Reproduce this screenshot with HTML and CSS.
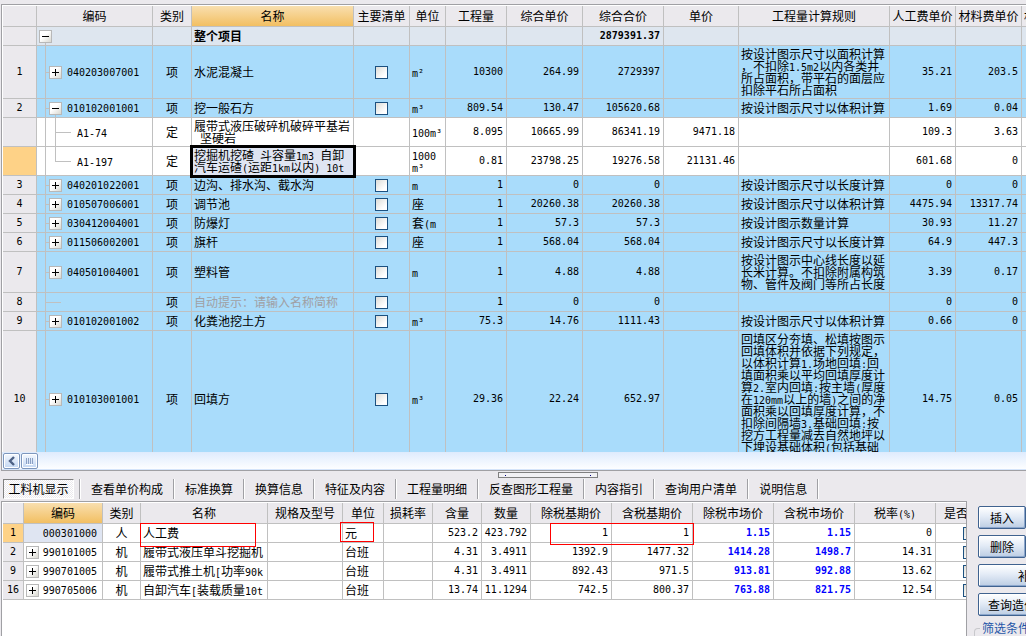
FILE: index.html
```html
<!DOCTYPE html>
<html lang="zh-CN">
<head>
<meta charset="utf-8">
<title>工程量清单</title>
<link rel="stylesheet" href="styles.css">
</head>
<body>
<main class="app">
<section class="upper">
<div class="grid-view">
<table class="grid main-grid">
<colgroup><col class="w34"><col class="w116"><col class="w39"><col class="w162"><col class="w56"><col class="w36"><col class="w61"><col class="w76"><col class="w81"><col class="w75"><col class="w151"><col class="w66"><col class="w66"><col class="w66"></colgroup>
<thead>
<tr><th></th><th>编码</th><th>类别</th><th class="active">名称</th><th>主要清单</th><th>单位</th><th>工程量</th><th>综合单价</th><th>综合合价</th><th>单价</th><th>工程量计算规则</th><th>人工费单价</th><th>材料费单价</th><th class="left">机械费单价</th></tr>
</thead>
<tbody>
<tr class="total"><th></th><td class="root"><button class="exp minus" aria-label="折叠"></button></td><td></td><td>整个项目</td><td></td><td></td><td></td><td></td><td class="num">2879391.37</td><td></td><td></td><td></td><td></td><td></td></tr>
<tr class="item h53"><th>1</th><td class="node"><button class="exp" aria-label="展开"></button><span class="n">040203007001</span></td><td class="mid">项</td><td>水泥混凝土</td><td class="mid"><input type="checkbox" aria-label="主要清单"></td><td><span class="n">m²</span></td><td class="num">10300</td><td class="num">264.99</td><td class="num">2729397</td><td></td><td>按设计图示尺寸以面积计算<br>，不扣除<span class="n">1.5m2</span>以内各类井<br>所占面积，带平石的面层应<br>扣除平石所占面积</td><td class="num">35.21</td><td class="num">203.5</td><td></td></tr>
<tr class="item"><th>2</th><td class="node open"><button class="exp minus" aria-label="折叠"></button><span class="n">010102001001</span></td><td class="mid">项</td><td>挖一般石方</td><td class="mid"><input type="checkbox" aria-label="主要清单"></td><td><span class="n">m³</span></td><td class="num">809.54</td><td class="num">130.47</td><td class="num">105620.68</td><td></td><td>按设计图示尺寸以体积计算</td><td class="num">1.69</td><td class="num">0.04</td><td></td></tr>
<tr class="h29"><th></th><td class="leaf"><span class="n">A1-74</span></td><td class="mid">定</td><td>履带式液压破碎机破碎平基岩<br><span class="n">&nbsp;</span>坚硬岩</td><td></td><td><span class="n">100m³</span></td><td class="num">8.095</td><td class="num">10665.99</td><td class="num">86341.19</td><td class="num">9471.18</td><td></td><td class="num">109.3</td><td class="num">3.63</td><td></td></tr>
<tr class="h29"><th class="current"></th><td class="leaf last"><span class="n">A1-197</span></td><td class="mid">定</td><td class="selected">挖掘机挖碴<span class="n">&nbsp;</span>斗容量<span class="n">1m3&nbsp;</span>自卸<br>汽车运碴<span class="n">(</span>运距<span class="n">1km</span>以内<span class="n">)&nbsp;10t</span></td><td></td><td><span class="n">1000<br>m³</span></td><td class="num">0.81</td><td class="num">23798.25</td><td class="num">19276.58</td><td class="num">21131.46</td><td></td><td class="num">601.68</td><td class="num">0</td><td></td></tr>
<tr class="item"><th>3</th><td class="node"><button class="exp" aria-label="展开"></button><span class="n">040201022001</span></td><td class="mid">项</td><td>边沟、排水沟、截水沟</td><td class="mid"><input type="checkbox" aria-label="主要清单"></td><td><span class="n">m</span></td><td class="num">1</td><td class="num">0</td><td class="num">0</td><td></td><td>按设计图示尺寸以长度计算</td><td class="num">0</td><td class="num">0</td><td></td></tr>
<tr class="item"><th>4</th><td class="node"><button class="exp" aria-label="展开"></button><span class="n">010507006001</span></td><td class="mid">项</td><td>调节池</td><td class="mid"><input type="checkbox" aria-label="主要清单"></td><td>座</td><td class="num">1</td><td class="num">20260.38</td><td class="num">20260.38</td><td></td><td>按设计图示尺寸以体积计算</td><td class="num">4475.94</td><td class="num">13317.74</td><td></td></tr>
<tr class="item"><th>5</th><td class="node"><button class="exp" aria-label="展开"></button><span class="n">030412004001</span></td><td class="mid">项</td><td>防爆灯</td><td class="mid"><input type="checkbox" aria-label="主要清单"></td><td>套<span class="n">(m</span></td><td class="num">1</td><td class="num">57.3</td><td class="num">57.3</td><td></td><td>按设计图示数量计算</td><td class="num">30.93</td><td class="num">11.27</td><td></td></tr>
<tr class="item"><th>6</th><td class="node"><button class="exp" aria-label="展开"></button><span class="n">011506002001</span></td><td class="mid">项</td><td>旗杆</td><td class="mid"><input type="checkbox" aria-label="主要清单"></td><td>座</td><td class="num">1</td><td class="num">568.04</td><td class="num">568.04</td><td></td><td>按设计图示尺寸以长度计算</td><td class="num">64.9</td><td class="num">447.3</td><td></td></tr>
<tr class="item h41"><th>7</th><td class="node"><button class="exp" aria-label="展开"></button><span class="n">040501004001</span></td><td class="mid">项</td><td>塑料管</td><td class="mid"><input type="checkbox" aria-label="主要清单"></td><td><span class="n">m</span></td><td class="num">1</td><td class="num">4.88</td><td class="num">4.88</td><td></td><td>按设计图示中心线长度以延<br>长米计算。不扣除附属构筑<br>物、管件及阀门等所占长度</td><td class="num">3.39</td><td class="num">0.17</td><td></td></tr>
<tr class="item"><th>8</th><td class="empty-node"></td><td class="mid">项</td><td class="hint">自动提示：请输入名称简称</td><td class="mid"><input type="checkbox" aria-label="主要清单"></td><td></td><td class="num">1</td><td class="num">0</td><td class="num">0</td><td></td><td></td><td class="num">0</td><td class="num">0</td><td></td></tr>
<tr class="item"><th>9</th><td class="node"><button class="exp" aria-label="展开"></button><span class="n">010102001002</span></td><td class="mid">项</td><td>化粪池挖土方</td><td class="mid"><input type="checkbox" aria-label="主要清单"></td><td><span class="n">m³</span></td><td class="num">75.3</td><td class="num">14.76</td><td class="num">1111.43</td><td></td><td>按设计图示尺寸以体积计算</td><td class="num">0.66</td><td class="num">0</td><td></td></tr>
<tr class="item h137"><th>10</th><td class="node"><button class="exp" aria-label="展开"></button><span class="n">010103001001</span></td><td class="mid">项</td><td>回填方</td><td class="mid"><input type="checkbox" aria-label="主要清单"></td><td><span class="n">m³</span></td><td class="num">29.36</td><td class="num">22.24</td><td class="num">652.97</td><td></td><td class="top">回填区分夯填、松填按图示<br>回填体积并依据下列规定，<br>以体积计算<span class="n">1.</span>场地回填<span class="n">:</span>回<br>填面积乘以平均回填厚度计<br>算<span class="n">2.</span>室内回填<span class="n">:</span>按主墙<span class="n">(</span>厚度<br>在<span class="n">120mm</span>以上的墙<span class="n">)</span>之间的净<br>面积乘以回填厚度计算，不<br>扣除间隔墙<span class="n">3.</span>基础回填<span class="n">:</span>按<br>挖方工程量减去自然地坪以<br>下埋设基础体积<span class="n">(</span>包括基础</td><td class="num">14.75</td><td class="num">0.05</td><td></td></tr>
</tbody>
</table>
</div>
<div class="scrollbar">
<button class="sb-arrow" aria-label="向左滚动"><svg width="8" height="10" viewBox="0 0 8 10"><path d="M6 1 2 5l4 4" fill="none" stroke="#4d6185" stroke-width="2.4"/></svg></button>
<button class="sb-thumb" aria-label="滚动条滑块"><svg width="9" height="7" viewBox="0 0 9 7"><path d="M1.500 0v6M3.500 0v6M5.500 0v6M7.500 0v6" stroke="#8ba0c4"/><path d="M1 6.500h7" stroke="#fff"/></svg></button>
</div>
</section>
<section class="lower">
<div class="handle"></div>
<nav class="tabs">
<div class="tab first"><button class="pressed">工料机显示</button></div>
<div class="tab"><button>查看单价构成</button></div>
<div class="tab"><button>标准换算</button></div>
<div class="tab"><button>换算信息</button></div>
<div class="tab"><button>特征及内容</button></div>
<div class="tab"><button>工程量明细</button></div>
<div class="tab"><button>反查图形工程量</button></div>
<div class="tab"><button>内容指引</button></div>
<div class="tab"><button>查询用户清单</button></div>
<div class="tab"><button>说明信息</button></div>
</nav>
<div class="detail">
<div class="detail-view">
<table class="grid detail-grid">
<colgroup><col class="w21"><col class="w79"><col class="w38"><col class="w127"><col class="w75"><col class="w41"><col class="w49"><col class="w49"><col class="w49"><col class="w81"><col class="w81"><col class="w81"><col class="w81"><col class="w81"><col class="w81"></colgroup>
<thead>
<tr><th></th><th class="active">编码</th><th>类别</th><th>名称</th><th>规格及型号</th><th>单位</th><th>损耗率</th><th>含量</th><th>数量</th><th>除税基期价</th><th>含税基期价</th><th>除税市场价</th><th>含税市场价</th><th>税率<span class="n">(%)</span></th><th class="cut">是否</th></tr>
</thead>
<tbody>
<tr><th class="current">1</th><td class="chosen"><div class="code"><span class="n">000301000</span></div></td><td class="mid">人</td><td>人工费</td><td></td><td>元</td><td></td><td class="num">523.2</td><td class="num">423.792</td><td class="num">1</td><td class="num">1</td><td class="num price">1.15</td><td class="num price">1.15</td><td class="num">0</td><td class="check"><input type="checkbox" aria-label="是否"></td></tr>
<tr><th>2</th><td><div class="code"><button class="exp" aria-label="展开"></button><span class="n">990101005</span></div></td><td class="mid">机</td><td>履带式液压单斗挖掘机</td><td></td><td>台班</td><td></td><td class="num">4.31</td><td class="num">3.4911</td><td class="num">1392.9</td><td class="num">1477.32</td><td class="num price">1414.28</td><td class="num price">1498.7</td><td class="num">14.31</td><td class="check"><input type="checkbox" aria-label="是否"></td></tr>
<tr><th>9</th><td><div class="code"><button class="exp" aria-label="展开"></button><span class="n">990701005</span></div></td><td class="mid">机</td><td>履带式推土机<span class="n">[</span>功率<span class="n">90k</span></td><td></td><td>台班</td><td></td><td class="num">4.31</td><td class="num">3.4911</td><td class="num">892.43</td><td class="num">971.5</td><td class="num price">913.81</td><td class="num price">992.88</td><td class="num">13.62</td><td class="check"><input type="checkbox" aria-label="是否"></td></tr>
<tr><th>16</th><td><div class="code"><button class="exp" aria-label="展开"></button><span class="n">990705006</span></div></td><td class="mid">机</td><td>自卸汽车<span class="n">[</span>装载质量<span class="n">10t</span></td><td></td><td>台班</td><td></td><td class="num">13.74</td><td class="num">11.1294</td><td class="num">742.5</td><td class="num">800.37</td><td class="num price">763.88</td><td class="num price">821.75</td><td class="num">12.54</td><td class="check"><input type="checkbox" aria-label="是否"></td></tr>
</tbody>
</table>
<div class="mark mark-name"></div>
<div class="mark mark-unit"></div>
<div class="mark mark-base"></div>
</div>
<aside class="side">
<button class="cmd">插入</button>
<button class="cmd">删除</button>
<button class="cmd wide add">补充</button>
<button class="cmd wide">查询造价</button>
<fieldset class="filter"><legend>筛选条件</legend></fieldset>
</aside>
</div>
</section>
</main>
</body>
</html>
```

FILE: styles.css
```css
* { box-sizing: border-box; }
body {
  margin: 0;
  background: #ebe9ed;
  color: #000;
  font: 12px/12px "Noto Sans CJK SC", sans-serif;
}
button, input, fieldset { margin: 0; font: inherit; color: inherit; }
button { padding: 0; border: 0; background: none; white-space: nowrap; }

.app { display: flex; flex-direction: column; height: 100vh; overflow: hidden; }
.upper {
  flex: 1;
  min-height: 0;
  display: flex;
  flex-direction: column;
  margin: 4px 0 0 1px;
  border: solid #a0a0a4;
  border-width: 1px 0 1px 1px;
}
.grid-view { flex: 1; min-height: 0; overflow: hidden; border: solid #fff; border-width: 1px 0 0 1px; }

/* grids */
.grid { table-layout: fixed; width: 0; border-collapse: separate; border-spacing: 0; }
.grid th, .grid td {
  padding: 0 3px 0 2px;
  border: solid #c0c0c0;
  border-width: 0 1px 1px 0;
  white-space: nowrap;
  overflow: hidden;
  vertical-align: middle;
}
.grid th { padding: 0; background: #ebe9ed; font-weight: 400; text-align: center; }
.grid thead tr { height: 21px; }
.grid tbody tr { height: 19px; }
.grid tbody td { background-color: #fff; text-align: left; }
.grid tbody th, .n, .grid td.num { font-family: "DejaVu Sans Mono", monospace; font-size: 10px; }
/* Latin runs sit on the line box of the surrounding text */
.n { line-height: 1px; }
.grid thead th.active { background: linear-gradient(#f9dfaf, #f2bf62); }
.grid thead th.left { text-align: left; padding-left: 2px; }
.grid tbody th.current { background: #fed287; }
.grid tbody td.num { text-align: right; }
.grid tbody td.mid { text-align: center; padding: 0; }
.grid tbody td.top { vertical-align: top; padding-top: 2px; }
.grid tbody tr.item td { background-color: #a9dcfb; }
.grid tbody tr.total td { background-color: #dee6ef; font-weight: 700; }
.grid tbody td.hint { color: #a0a0a4; }
.grid tbody td.selected { position: relative; background-color: #dfe5f2; outline: 3px solid #000; outline-offset: -1px; }
.grid tbody tr.h29 { height: 29px; }
.grid tbody tr.h41 { height: 41px; }
.grid tbody tr.h53 { height: 53px; }
.grid tbody tr.h137 { height: 137px; }

.w21 { width: 21px; } .w34 { width: 34px; } .w36 { width: 36px; } .w38 { width: 38px; }
.w39 { width: 39px; } .w41 { width: 41px; } .w49 { width: 49px; } .w56 { width: 56px; }
.w61 { width: 61px; } .w66 { width: 66px; } .w75 { width: 75px; } .w76 { width: 76px; }
.w79 { width: 79px; } .w81 { width: 81px; } .w116 { width: 116px; } .w127 { width: 127px; }
.w151 { width: 151px; } .w162 { width: 162px; }

/* tree column: connector lines are background strips */
.root, .node, .leaf, .empty-node {
  --line: linear-gradient(#c0c0c0, #c0c0c0);
  background-repeat: no-repeat;
}
.grid td.root { padding-left: 2px; background-image: var(--line); background-size: 1px 4px; background-position: 8px 100%; }
.grid td.node { padding-left: 12px; background-image: var(--line), var(--line); background-size: 1px 100%, 4px 1px; background-position: 8px 0, 8px 50%; }
.grid td.node.open { background-image: var(--line), var(--line), var(--line); background-size: 1px 100%, 4px 1px, 1px 4px; background-position: 8px 0, 8px 50%, 18px 100%; }
.grid td.leaf { padding-left: 40px; background-image: var(--line), var(--line), var(--line); background-size: 1px 100%, 1px 100%, 16px 1px; background-position: 8px 0, 18px 0, 18px 50%; }
.grid td.leaf.last { background-size: 1px 100%, 1px 50%, 16px 1px; }
.grid td.empty-node { background-image: var(--line), var(--line); background-size: 1px 100%, 16px 1px; background-position: 8px 0, 8px 50%; }
.node .n { margin-left: 5px; }

.exp {
  width: 13px;
  height: 13px;
  vertical-align: middle;
  border: 1px solid #b8b8b8;
  background:
    linear-gradient(#000, #000) center / 7px 1px no-repeat,
    linear-gradient(#000, #000) center / 1px 7px no-repeat,
    linear-gradient(135deg, #fff 40%, #d9d8d0);
}
.exp.minus {
  background:
    linear-gradient(#000, #000) center / 7px 1px no-repeat,
    linear-gradient(135deg, #fff 40%, #d9d8d0);
}
input[type="checkbox"] {
  appearance: none;
  display: block;
  width: 13px;
  height: 13px;
  margin: 0 auto;
  border: 1px solid #1c5180;
  background: linear-gradient(135deg, #dcdcd7, #fff 75%);
}

/* horizontal scrollbar */
.scrollbar {
  display: flex;
  flex: none;
  gap: 1px;
  height: 18px;
  padding: 1px 0 0 1px;
  border-bottom: 1px solid #d4e4fa;
  background: linear-gradient(#deebfd, #fdfeff);
}
.sb-arrow, .sb-thumb {
  display: flex;
  align-items: center;
  justify-content: center;
  width: 17px;
  height: 16px;
  border: 1px solid #7d96bd;
  border-radius: 2px;
  background: linear-gradient(#f4f8fe, #c3d7f3);
  box-shadow: inset 0 0 0 1px #fff;
}

/* lower pane */
.lower { position: relative; flex: none; }
.handle {
  position: absolute;
  top: 1px;
  left: 498px;
  width: 100px;
  height: 6px;
  border: 1px solid #808080;
  background:
    linear-gradient(#000080, #000080) 6px 2px / 1px 1px no-repeat,
    linear-gradient(#000080, #000080) 91px 2px / 1px 1px no-repeat,
    #f2f1f4;
}
.tabs { display: flex; padding: 8px 0 2px; }
.tab { display: flex; height: 20px; padding: 0 10px 0 11px; border-right: 1px solid #a0a0a4; box-shadow: 1px 0 #fff; }
.tab.first { padding: 0 5px 0 3px; }
.pressed {
  width: 71px;
  border: 1px solid;
  border-color: #808080 #fff #fff #808080;
  background: repeating-conic-gradient(#fff 0 25%, #ebe9ed 0 50%) 0 0 / 2px 2px;
}
.detail { display: flex; min-height: 135px; }
.detail-view {
  position: relative;
  flex: 1;
  min-width: 0;
  overflow: hidden;
  margin-left: 1px;
  border: 1px solid #a0a0a4;
  border-bottom: 0;
  background: #fff;
}
.detail-grid { margin: 1px 0 0 1px; }
.grid thead th.cut { text-align: left; padding-left: 8px; }
.grid td.check { padding-left: 27px; }
.check input { margin: 0; }
.code { display: flex; align-items: center; justify-content: space-between; padding-right: 2px; }
.code .n:only-child { margin-left: auto; }
.grid tbody td.chosen { background-color: #dfe5f2; }
.grid tbody td.price { color: #00f; font-weight: 700; }
.mark { position: absolute; border: 1px solid #f00; }
.mark-name { left: 138px; top: 21px; width: 116px; height: 24px; }
.mark-unit { left: 338px; top: 20px; width: 34px; height: 20px; }
.mark-base { left: 548px; top: 21px; width: 144px; height: 22px; }

.side {
  flex: none;
  width: 59px;
  display: flex;
  flex-direction: column;
  align-items: flex-start;
  gap: 6px;
  padding: 5px 0 0 11px;
  overflow: hidden;
}
.cmd {
  flex: none;
  width: 48px;
  height: 23px;
  border: 1px solid #3f628f;
  border-radius: 2px;
  background: linear-gradient(#fff, #e3ebf6 45%, #bccde3);
  box-shadow: inset -1px -1px #8ba6cc, inset 1px 1px #fff;
}
.cmd.wide { width: 104px; text-align: left; padding-left: 9px; }
.cmd.add { padding-left: 39px; }
.filter {
  flex: none;
  width: 120px;
  height: 14px;
  margin-left: -4px;
  padding: 0;
  border: 1px solid #c8c8cc;
  border-bottom: 0;
  border-radius: 4px 4px 0 0;
}
.filter legend { margin-left: 5px; padding: 0 2px; color: #1f56a8; }
```
